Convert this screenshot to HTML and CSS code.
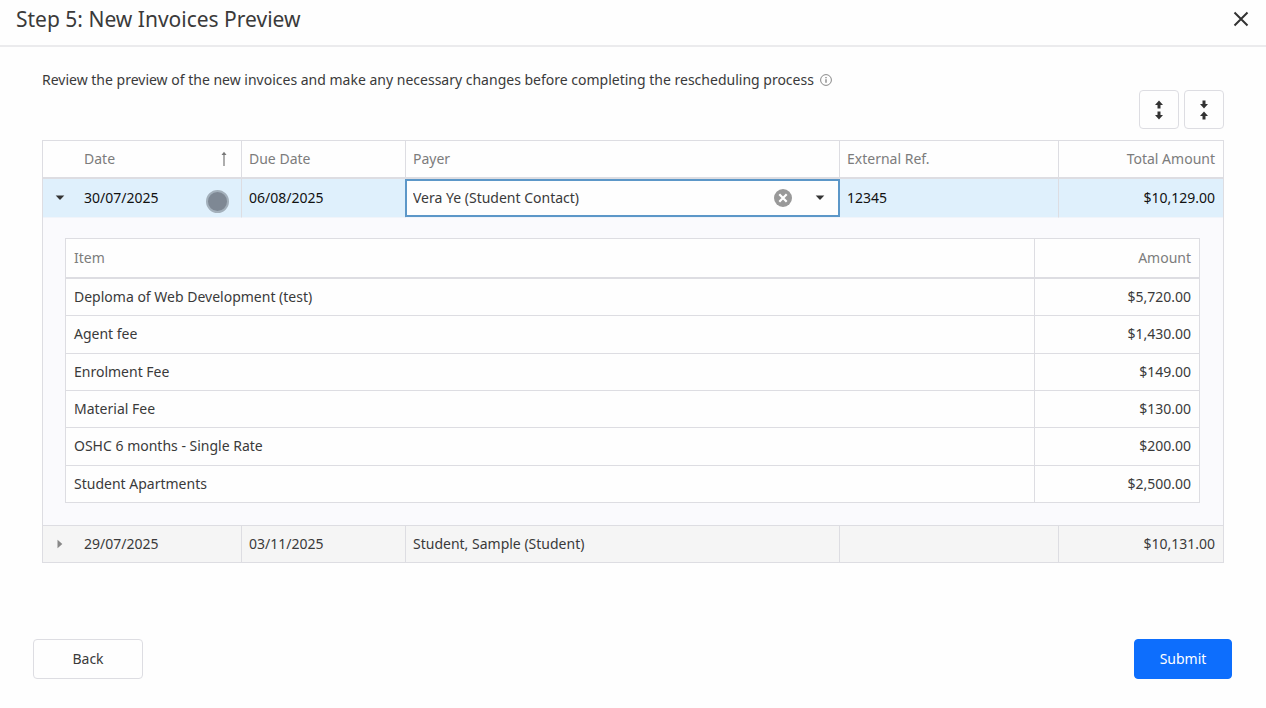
FILE: index.html
```html
<!DOCTYPE html>
<html lang="en">
<head>
    <meta charset="UTF-8">
    <meta name="viewport" content="width=device-width, initial-scale=1.0">
    <title>New Invoices Preview</title>
    <link rel="stylesheet" href="styles.css">
</head>
<body>
    <header class="dialog-header">
        <h1>Step 5: New Invoices Preview</h1>
        <button type="button" class="close-button" aria-label="Close">
            <svg width="16" height="16" viewBox="0 0 16 16"><path d="M1.5 1.5l13 13M14.5 1.5l-13 13" fill="none" stroke="#333" stroke-width="2"/></svg>
        </button>
    </header>
    <main class="content">
        <p class="intro">
            Review the preview of the new invoices and make any necessary changes before completing the rescheduling process
            <svg class="info-icon" width="12" height="12" viewBox="0 0 12 12"><circle cx="6" cy="6" r="5.4" fill="none" stroke="#888"/><path d="M6 5.2v3.6M6 3v1.3" stroke="#777" stroke-width="1.2"/></svg>
        </p>
        <div class="toolbar">
            <button type="button" class="tool-button" aria-label="Expand all">
                <svg width="8" height="20" viewBox="0 0 8 20"><path d="M4 .5L0 5h2.500v3.500h3V5H8zM4 19.500L0 15h2.500v-3.500h3V15H8z" fill="#333"/></svg>
            </button>
            <button type="button" class="tool-button" aria-label="Collapse all">
                <svg width="8" height="20" viewBox="0 0 8 20"><path d="M4 8.500L0 4h2.500V.5h3V4H8zM4 11.500L0 16h2.500v3.500h3V16H8z" fill="#333"/></svg>
            </button>
        </div>
        <table class="grid invoices">
            <colgroup>
                <col class="col-expand">
                <col class="col-date">
                <col class="col-due">
                <col>
                <col class="col-ref">
                <col class="col-total">
            </colgroup>
            <thead>
                <tr>
                    <th class="expand-cell"></th>
                    <th>
                        <div class="sorted">
                            Date
                            <svg width="8" height="16" viewBox="0 0 8 16"><path d="M4 15V2" fill="none" stroke="#777" stroke-width="1.2"/><path d="M1.500 4L4 .8L6.500 4z" fill="#777"/></svg>
                        </div>
                    </th>
                    <th>Due Date</th>
                    <th>Payer</th>
                    <th>External Ref.</th>
                    <th class="number">Total Amount</th>
                </tr>
            </thead>
            <tbody>
                <tr class="selected">
                    <td class="expand-cell">
                        <button type="button" class="expand-button" aria-label="Collapse row">
                            <svg width="10" height="10" viewBox="0 0 10 10"><path d="M.7 2.500h8.600L5 7z" fill="#333"/></svg>
                        </button>
                    </td>
                    <td class="date-cell">30/07/2025<span class="touch-point"></span></td>
                    <td>06/08/2025</td>
                    <td class="editor-cell">
                        <div class="payer-editor">
                            <select aria-label="Payer">
                                <option>Vera Ye (Student Contact)</option>
                                <option>Student, Sample (Student)</option>
                            </select>
                            <button type="button" class="clear-button" aria-label="Clear payer">
                                <svg width="18" height="18" viewBox="0 0 18 18"><circle cx="9" cy="9" r="9" fill="#999"/><path d="M5.300 5.300l7.400 7.400M12.700 5.300l-7.400 7.400" stroke="#fff" stroke-width="2.200"/></svg>
                            </button>
                            <svg class="caret" width="10" height="10" viewBox="0 0 10 10"><path d="M.7 2.500h8.600L5 7z" fill="#333"/></svg>
                        </div>
                    </td>
                    <td>12345</td>
                    <td class="number">$10,129.00</td>
                </tr>
                <tr>
                    <td class="detail" colspan="6">
                        <table class="grid items">
                            <colgroup>
                                <col>
                                <col class="col-amount">
                            </colgroup>
                            <thead>
                                <tr><th>Item</th><th class="number">Amount</th></tr>
                            </thead>
                            <tbody>
                                <tr><td>Deploma of Web Development (test)</td><td class="number">$5,720.00</td></tr>
                                <tr><td>Agent fee</td><td class="number">$1,430.00</td></tr>
                                <tr><td>Enrolment Fee</td><td class="number">$149.00</td></tr>
                                <tr><td>Material Fee</td><td class="number">$130.00</td></tr>
                                <tr><td>OSHC 6 months - Single Rate</td><td class="number">$200.00</td></tr>
                                <tr><td>Student Apartments</td><td class="number">$2,500.00</td></tr>
                            </tbody>
                        </table>
                    </td>
                </tr>
                <tr class="alternate">
                    <td class="expand-cell">
                        <button type="button" class="expand-button" aria-label="Expand row">
                            <svg width="10" height="10" viewBox="0 0 10 10"><path d="M2.500 .7v8.600L7.300 5z" fill="#888"/></svg>
                        </button>
                    </td>
                    <td>29/07/2025</td>
                    <td>03/11/2025</td>
                    <td>Student, Sample (Student)</td>
                    <td></td>
                    <td class="number">$10,131.00</td>
                </tr>
            </tbody>
        </table>
    </main>
    <footer class="dialog-footer">
        <button type="button" class="button back">Back</button>
        <button type="submit" class="button submit">Submit</button>
    </footer>
</body>
</html>
```
FILE: styles.css
```css
* {
    box-sizing: border-box;
}
body {
    margin: 0;
    background-color: #fefefe;
    color: #3a3a3a;
    font-family: "Noto Sans", "Open Sans", sans-serif;
    font-size: 14px;
    line-height: 20px;
}
button,
select {
    margin: 0;
    padding: 0;
    border: none;
    background: none;
    color: inherit;
    font: inherit;
    cursor: pointer;
}
svg {
    display: block;
}
.dialog-header {
    display: flex;
    align-items: center;
    justify-content: space-between;
    padding: 5px 16px 12px;
    border-bottom: 2px solid #ebebed;
}
.dialog-header h1 {
    margin: 0;
    font-size: 21px;
    font-weight: normal;
    line-height: 28px;
}
.close-button {
    padding: 0 1px;
}
.content {
    padding: 23px 42px 0;
}
.intro {
    display: flex;
    align-items: center;
    gap: 6px;
    margin: 0;
}
.toolbar {
    display: flex;
    justify-content: flex-end;
    gap: 5px;
    margin-bottom: 11px;
}
.tool-button {
    display: flex;
    align-items: center;
    justify-content: center;
    width: 40px;
    height: 39px;
    border: 1px solid #dddde2;
    border-radius: 4px;
}

/* Grids */
.grid {
    width: 100%;
    table-layout: fixed;
    border-collapse: separate;
    border-spacing: 0;
    border: 1px solid #dddde2;
    border-bottom: none;
}
.grid th,
.grid td {
    height: 37px;
    padding: 0 8px 0 7px;
    border-right: 1px solid #dddde2;
    border-bottom: 1px solid #dddde2;
    font-weight: normal;
    text-align: left;
}
.grid th {
    height: 38px;
    border-bottom-width: 2px;
    color: #7c7c7c;
}
.grid th:last-child,
.grid td:last-child {
    border-right: none;
}
.grid .number {
    text-align: right;
}
.grid .expand-cell {
    padding: 0 12px;
    border-right: none;
}
.col-expand {
    width: 34px;
}
.col-date {
    width: 165px;
}
.col-due,
.col-total,
.col-amount {
    width: 164px;
}
.col-ref {
    width: 219px;
}
.sorted {
    display: flex;
    align-items: center;
    justify-content: space-between;
    padding-right: 5px;
}
.expand-button {
    display: block;
}
.selected {
    background-color: #dff0fc;
    color: #111;
}
.grid .selected td {
    height: 38px;
    border-bottom-color: #f0f4fa;
}
.alternate {
    background-color: #f5f5f5;
}
.date-cell {
    position: relative;
}
.touch-point {
    position: absolute;
    top: 11px;
    right: 12px;
    width: 23px;
    height: 23px;
    border: 2px solid #a3b0bb;
    border-radius: 50%;
    background-color: #7e8894;
}
.grid .editor-cell {
    padding: 0;
    border-right: none;
}
.payer-editor {
    position: relative;
    height: 38px;
    margin-left: -1px;
    border: 2px solid #5c97c8;
    background-color: #fefefe;
    color: #3a3a3a;
}
.payer-editor select {
    width: 100%;
    height: 100%;
    padding: 0 80px 0 6px;
    appearance: none;
    outline: none;
}
.clear-button {
    position: absolute;
    top: 8px;
    right: 46px;
}
.caret {
    position: absolute;
    top: 12px;
    right: 13px;
    pointer-events: none;
}
.grid .detail {
    padding: 20px 23px 22px 22px;
    background-color: #fafafd;
}
.items {
    height: 265px;
    background-color: #fefefe;
}
.grid.items th,
.grid.items td {
    padding: 0 8px;
}
.grid.items th {
    height: 40px;
}

/* Footer */
.dialog-footer {
    display: flex;
    justify-content: space-between;
    padding: 76px 34px 28px 33px;
}
.button {
    height: 40px;
    border: 1px solid #dddde2;
    border-radius: 4px;
}
.back {
    width: 110px;
}
.submit {
    width: 98px;
    border-color: #0d6efd;
    background-color: #0d6efd;
    color: #fff;
}
```
